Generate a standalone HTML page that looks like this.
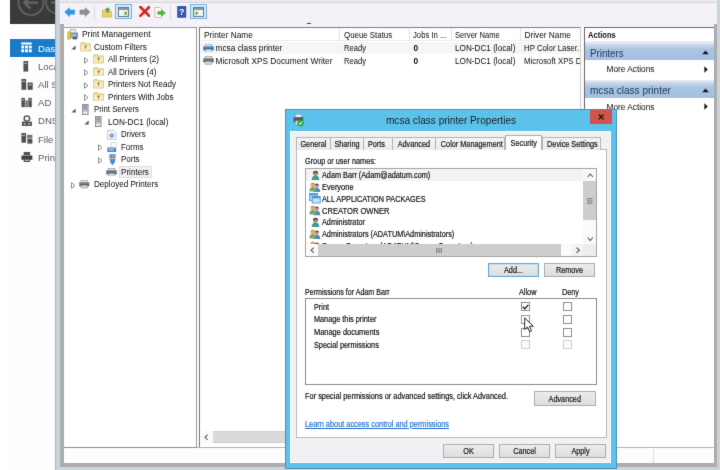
<!DOCTYPE html>
<html>
<head>
<meta charset="utf-8">
<title>Print Management</title>
<style>
html,body{margin:0;padding:0;}
body{width:720px;height:470px;position:relative;overflow:hidden;background:#ffffff;font-family:"Liberation Sans",sans-serif;color:#222;}
.a{position:absolute;}
.t{position:absolute;white-space:nowrap;line-height:1;transform-origin:0 50%;}
/* MMC (Segoe-like) text */
.m{font-size:8.3px;color:#0a0a0a;height:10px;line-height:10px;}
/* dialog (MS Sans Serif-like) text */
.d{font-size:8.5px;color:#0c0c0c;height:10px;line-height:10px;transform:scaleX(0.857);-webkit-text-stroke-width:0.18px;}
.sm{font-size:9.6px;color:#585858;height:12px;line-height:12px;}
.btn{position:absolute;box-sizing:border-box;border:1px solid #adadad;background:linear-gradient(#ececec,#dedede);height:14px;}
.btn span{white-space:nowrap;position:absolute;left:0;right:0;top:1.9px;text-align:center;font-size:8.5px;line-height:10px;color:#101010;transform:scaleX(0.857);-webkit-text-stroke-width:0.18px;}
.cb{position:absolute;box-sizing:border-box;width:9px;height:9px;border:1px solid #8c8c8c;background:#fff;}
.cb.dis{border-color:#cfcfcf;background:#fafafa;}
.tab{position:absolute;box-sizing:border-box;top:137.2px;height:12.8px;border:1px solid #b4b4b4;border-bottom:none;background:linear-gradient(#f4f4f4,#ebebeb);}
.tab span{white-space:nowrap;position:absolute;left:0;right:0;top:0.9px;text-align:center;font-size:8.5px;line-height:10px;color:#101010;transform:scaleX(0.857);-webkit-text-stroke-width:0.18px;}
.exp{position:absolute;width:0;height:0;}
</style>
</head>
<body>
<svg width="0" height="0" style="position:absolute;left:0;top:0"><defs><filter id="soft" x="0" y="0" width="100%" height="100%" color-interpolation-filters="sRGB"><feConvolveMatrix order="3" kernelMatrix="0.0081 0.0738 0.0081 0.0738 0.6724 0.0738 0.0081 0.0738 0.0081" edgeMode="duplicate" preserveAlpha="true"/></filter></defs></svg>
<div id="wrap" style="position:absolute;left:0;top:0;width:720px;height:470px;overflow:hidden;background:#fff;filter:url(#soft);">

<!-- ===== Server Manager strip (behind) ===== -->
<div class="a" style="left:10px;top:0;width:46px;height:470px;background:#fefcfe;"></div>
<div class="a" style="left:10px;top:0;width:46px;height:24px;background:#3a3a3a;overflow:hidden;">
  <svg class="a" style="left:0;top:0" width="46" height="24" viewBox="0 0 46 24">
    <circle cx="21" cy="2.5" r="12.5" fill="none" stroke="#666666" stroke-width="1.6"/>
    <path d="M28 2.6 H14.5 M20.5 -3.5 L14.3 2.6 L20.5 8.6" fill="none" stroke="#666666" stroke-width="2.2"/>
    <circle cx="47" cy="2.5" r="11" fill="none" stroke="#666666" stroke-width="1.6"/>
    <path d="M41 2.6 H50" stroke="#666666" stroke-width="2"/>
  </svg>
</div>
<div class="a" style="left:10px;top:39.3px;width:46px;height:17.6px;background:#1a7bc9;"></div>
<!-- menu icons -->
<svg class="a" style="left:20px;top:42.2px" width="13" height="11.4" viewBox="0 0 13 12">
  <rect x="1" y="0.5" width="11" height="2.2" fill="#fff"/>
  <rect x="1" y="3.8" width="3" height="3" fill="#fff"/><rect x="5" y="3.8" width="3" height="3" fill="#fff"/><rect x="9" y="3.8" width="3" height="3" fill="#fff"/>
  <rect x="1" y="7.8" width="3" height="3" fill="#fff"/><rect x="5" y="7.8" width="3" height="3" fill="#fff"/><rect x="9" y="7.8" width="3" height="3" fill="#fff"/>
</svg>
<div class="t sm" style="left:38px;top:42.5px;color:#fff;">Dashboard</div>

<svg class="a" style="left:23.3px;top:61px" width="5.6" height="10.6" viewBox="0 0 6 12" preserveAspectRatio="none"><rect x="0.5" y="0" width="5" height="12" fill="#505050"/><rect x="1.5" y="2" width="3" height="1" fill="#ddd"/></svg>
<div class="t sm" style="left:38px;top:60.7px;">Local Server</div>

<svg class="a" style="left:20.5px;top:79px" width="12.2" height="10.8" viewBox="0 0 13 12" preserveAspectRatio="none"><rect x="0.5" y="0" width="5" height="12" fill="#505050"/><rect x="7" y="4" width="5.5" height="8" fill="#505050"/><rect x="1.5" y="2" width="3" height="1" fill="#ddd"/><rect x="8" y="6" width="3.5" height="1" fill="#ddd"/></svg>
<div class="t sm" style="left:38px;top:78.9px;">All Servers</div>

<svg class="a" style="left:21px;top:97px" width="11.2" height="11" viewBox="0 0 13 13" preserveAspectRatio="none"><rect x="0.5" y="1" width="4" height="11" fill="#505050"/><rect x="8.5" y="1" width="4" height="11" fill="#505050"/><rect x="5" y="4" width="3" height="8" fill="#777"/><rect x="1.5" y="3" width="2" height="1" fill="#ddd"/><rect x="9.5" y="3" width="2" height="1" fill="#ddd"/></svg>
<div class="t sm" style="left:38px;top:97.1px;">AD</div>

<svg class="a" style="left:20.8px;top:115px" width="11.8" height="11.4" viewBox="0 0 13 13" preserveAspectRatio="none"><circle cx="6.5" cy="4" r="3" fill="none" stroke="#505050" stroke-width="1.6"/><rect x="1" y="7.5" width="11" height="5" fill="#505050"/><rect x="3" y="9.5" width="2" height="1.5" fill="#ddd"/><rect x="8" y="9.5" width="2" height="1.5" fill="#ddd"/></svg>
<div class="t sm" style="left:38px;top:115.3px;">DNS</div>

<svg class="a" style="left:20.8px;top:133.4px" width="11.8" height="10.6" viewBox="0 0 13 12" preserveAspectRatio="none"><rect x="0.5" y="0" width="5" height="11" fill="#505050"/><rect x="6.5" y="2" width="6" height="4" fill="#777"/><rect x="7" y="6.5" width="5.5" height="5.5" fill="#505050"/><rect x="1.5" y="2" width="3" height="1" fill="#ddd"/></svg>
<div class="t sm" style="left:38px;top:133.5px;">File and Storage</div>

<svg class="a" style="left:20.8px;top:152px" width="11.8" height="10.4" viewBox="0 0 13 12" preserveAspectRatio="none"><rect x="3" y="0" width="7" height="3.5" fill="#505050"/><rect x="0.5" y="4" width="12" height="5" fill="#404040"/><rect x="3" y="7.5" width="7" height="4.5" fill="#505050"/><rect x="4" y="9" width="5" height="1" fill="#ddd"/></svg>
<div class="t sm" style="left:38px;top:151.7px;">Print Services</div>

<!-- ===== MMC window frame ===== -->
<div class="a" id="frame" style="left:55px;top:0;width:665px;height:470px;background:#c9d5dd;border-left:1px solid #a9b3ba;box-sizing:border-box;"></div>
<!-- menu/toolbar band -->
<div class="a" style="left:60px;top:0;width:657px;height:25px;background:#f4f2f8;"></div>
<div class="a" style="left:60px;top:0;width:657px;height:2px;background:#ebe9ee;"></div>
<div class="a" style="left:60px;top:2px;width:657px;height:1px;background:#d9d7dc;"></div>
<!-- gray sunken border -->
<div class="a" style="left:60px;top:24px;width:656.5px;height:443px;background:#adabad;"></div>
<!-- inner client -->
<div class="a" id="client" style="left:63.5px;top:24px;width:650px;height:439px;background:#f4f2f8;"></div>

<!-- ===== Toolbar ===== -->
<!-- back arrow -->
<svg class="a" style="left:63.7px;top:6.8px" width="11.6" height="10.2" viewBox="0 0 13 12"><path d="M0.5 6 L6 0.8 V3.6 H12.2 V8.4 H6 V11.2 Z" fill="#2f9be8" stroke="#1d7fd0" stroke-width="0.6"/></svg>
<!-- forward arrow -->
<svg class="a" style="left:79.4px;top:6.8px" width="11.6" height="10.2" viewBox="0 0 13 12"><path d="M12.5 6 L7 0.8 V3.6 H0.8 V8.4 H7 V11.2 Z" fill="#8f8f8f" stroke="#7a7a7a" stroke-width="0.6"/></svg>
<div class="a" style="left:94px;top:5px;width:1px;height:15px;background:#dddbe1;"></div>
<!-- up folder -->
<svg class="a" style="left:101.8px;top:7px" width="10.4" height="10.6" viewBox="0 0 12 12"><path d="M0.5 3.5 H5 L6 5 H11.5 V11.5 H0.5 Z" fill="#e8cf6a" stroke="#b89b3c" stroke-width="0.6"/><path d="M6.5 0.5 L9.5 3.2 H7.6 V6 H5.4 V3.2 H3.5 Z" fill="#4caf3a" stroke="#2e7d1f" stroke-width="0.4"/></svg>
<!-- show/hide tree (selected) -->
<div class="a" style="left:115px;top:3.8px;width:16.8px;height:15.6px;box-sizing:border-box;border:1px solid #6cb4e6;background:#d4e8f8;"></div>
<svg class="a" style="left:118px;top:7px" width="11" height="10" viewBox="0 0 11 10"><rect x="0.5" y="0.5" width="10" height="9" fill="#f6f6f6" stroke="#707a84" stroke-width="1"/><rect x="1" y="1" width="9" height="2" fill="#8a97a6"/><rect x="5" y="3.5" width="5" height="5.5" fill="#dcebd0"/><path d="M8.5 4.6 V8 L6.4 6.3 Z" fill="#2e7d1f"/></svg>
<!-- red X -->
<svg class="a" style="left:138.5px;top:6.3px" width="11.6" height="10.8" viewBox="0 0 13 12"><path d="M1.5 1 L11.5 11 M11.5 1 L1.5 11" stroke="#d62828" stroke-width="3.1" stroke-linecap="round"/></svg>
<!-- export -->
<svg class="a" style="left:154.3px;top:6.5px" width="12.2" height="11" viewBox="0 0 13 12"><path d="M0.8 0.5 H6.5 L8.5 2.5 V11.5 H0.8 Z" fill="#fbfbf4" stroke="#a9a9a0" stroke-width="0.7"/><path d="M4 5 H8 V3 L12.3 6.5 L8 10 V8 H4 Z" fill="#55b83e" stroke="#2e8a22" stroke-width="0.5"/></svg>
<div class="a" style="left:169.5px;top:5px;width:1px;height:15px;background:#dddbe1;"></div>
<!-- help -->
<svg class="a" style="left:177px;top:6px" width="9.5" height="11.6" viewBox="0 0 10 13"><rect x="0.3" y="0.3" width="9.4" height="12.4" fill="#3557b0" stroke="#27408a" stroke-width="0.6"/><text x="5" y="10" font-family="Liberation Sans" font-size="10" font-weight="bold" fill="#fff" text-anchor="middle">?</text></svg>
<!-- action pane toggle (selected) -->
<div class="a" style="left:190.2px;top:3.8px;width:16.6px;height:15.6px;box-sizing:border-box;border:1px solid #6cb4e6;background:#d4e8f8;"></div>
<svg class="a" style="left:192.8px;top:7px" width="11" height="10" viewBox="0 0 11 10"><rect x="0.5" y="0.5" width="10" height="9" fill="#f6f6f6" stroke="#707a84" stroke-width="1"/><rect x="1" y="1" width="9" height="2" fill="#8a97a6"/><rect x="1" y="3.5" width="5" height="5.5" fill="#dcebd0"/><path d="M2.8 4.6 V8 L4.9 6.3 Z" fill="#2e7d1f"/></svg>
<div class="a" style="left:307px;top:22.5px;width:4px;height:1.5px;background:#444;"></div>

<!-- ===== Tree pane ===== -->
<div class="a" id="tree" style="left:63.5px;top:26.5px;width:133.5px;height:421px;box-sizing:border-box;background:#fff;border-top:1px solid #9c9c9c;border-right:1px solid #9c9c9c;border-bottom:1px solid #8c8c8c;"></div>
<!-- splitter -->
<div class="a" style="left:197px;top:26.5px;width:2px;height:421px;background:#fbfafc;"></div>
<!-- ===== List pane ===== -->
<div class="a" id="list" style="left:199px;top:26.5px;width:382px;height:420.2px;box-sizing:border-box;background:#fff;border-top:1px solid #7f7f7f;border-left:1.5px solid #7a7a7a;border-right:1px solid #cfcfcf;"></div>
<!-- gap between list and actions -->
<div class="a" style="left:581px;top:26.5px;width:3.5px;height:421px;background:#fbfafc;"></div>
<!-- ===== Actions pane ===== -->
<div class="a" id="actions" style="left:583.5px;top:26.5px;width:130px;height:421px;box-sizing:border-box;background:#fff;border-top:1.5px solid #6a6a6a;border-left:1.5px solid #6a6a6a;"></div>
<!-- status bar -->
<div class="a" style="left:63.5px;top:447.5px;width:650px;height:15.5px;background:#fdfdfd;"></div>
<div class="a" style="left:197px;top:446.7px;width:516.5px;height:1px;background:#b2b2b2;"></div>

<!-- ===== Tree content ===== -->
<svg class="a" style="left:66.5px;top:29px" width="11.5" height="11" viewBox="0 0 11.5 11"><rect x="3.4" y="0.6" width="5" height="4" fill="#eceef0" stroke="#8a8f94" stroke-width="0.6"/><rect x="2.6" y="3.6" width="8.4" height="5.2" fill="#7b8a96"/><rect x="4" y="5" width="5.6" height="2.8" fill="#9db9d6"/><rect x="0.6" y="2.6" width="3" height="7.8" rx="1" fill="#e3c93c" stroke="#b59a20" stroke-width="0.5"/><rect x="5.5" y="8" width="4.5" height="2.4" fill="#4d5f9a"/></svg>
<div class="t m" style="left:81.5px;top:29px;transform:scaleX(1.0104);">Print Management</div>
<svg class="a" style="left:70.5px;top:45.0px" width="5" height="5" viewBox="0 0 5 5"><path d="M4.6 0.4 V4.6 H0.4 Z" fill="#555"/></svg>
<svg class="a" style="left:80px;top:42px" width="11" height="9.5" viewBox="0 0 11 9.5"><path d="M0.4 1.8 V9.1 H10.6 V1.8 H5.6 L4.6 0.5 H1.2 Z" fill="#eddc98" stroke="#cdb66a" stroke-width="0.6"/><rect x="1" y="3" width="9" height="5.6" fill="#f5ebbc"/><path d="M3.9 3.8 H7.3 L5.9 5.3 V7.2 H5.3 V5.3 Z" fill="#6f6850"/></svg>
<div class="t m" style="left:94.3px;top:41.5px;transform:scaleX(0.9872);">Custom Filters</div>
<svg class="a" style="left:84.3px;top:56.7px" width="4.5" height="7" viewBox="0 0 4.5 7"><path d="M0.5 0.7 L4 3.5 L0.5 6.3 Z" fill="#fff" stroke="#6e6e6e" stroke-width="0.8"/></svg>
<svg class="a" style="left:93.3px;top:54.4px" width="11" height="9.5" viewBox="0 0 11 9.5"><path d="M0.4 1.8 V9.1 H10.6 V1.8 H5.6 L4.6 0.5 H1.2 Z" fill="#eddc98" stroke="#cdb66a" stroke-width="0.6"/><rect x="1" y="3" width="9" height="5.6" fill="#f5ebbc"/><path d="M3.9 3.8 H7.3 L5.9 5.3 V7.2 H5.3 V5.3 Z" fill="#6f6850"/></svg>
<div class="t m" style="left:107.5px;top:54px;transform:scaleX(0.9703);">All Printers (2)</div>
<svg class="a" style="left:84.3px;top:69.2px" width="4.5" height="7" viewBox="0 0 4.5 7"><path d="M0.5 0.7 L4 3.5 L0.5 6.3 Z" fill="#fff" stroke="#6e6e6e" stroke-width="0.8"/></svg>
<svg class="a" style="left:93.3px;top:66.9px" width="11" height="9.5" viewBox="0 0 11 9.5"><path d="M0.4 1.8 V9.1 H10.6 V1.8 H5.6 L4.6 0.5 H1.2 Z" fill="#eddc98" stroke="#cdb66a" stroke-width="0.6"/><rect x="1" y="3" width="9" height="5.6" fill="#f5ebbc"/><path d="M3.9 3.8 H7.3 L5.9 5.3 V7.2 H5.3 V5.3 Z" fill="#6f6850"/></svg>
<div class="t m" style="left:107.5px;top:66.5px;transform:scaleX(0.9612);">All Drivers (4)</div>
<svg class="a" style="left:84.3px;top:81.7px" width="4.5" height="7" viewBox="0 0 4.5 7"><path d="M0.5 0.7 L4 3.5 L0.5 6.3 Z" fill="#fff" stroke="#6e6e6e" stroke-width="0.8"/></svg>
<svg class="a" style="left:93.3px;top:79.4px" width="11" height="9.5" viewBox="0 0 11 9.5"><path d="M0.4 1.8 V9.1 H10.6 V1.8 H5.6 L4.6 0.5 H1.2 Z" fill="#eddc98" stroke="#cdb66a" stroke-width="0.6"/><rect x="1" y="3" width="9" height="5.6" fill="#f5ebbc"/><path d="M3.9 3.8 H7.3 L5.9 5.3 V7.2 H5.3 V5.3 Z" fill="#6f6850"/></svg>
<div class="t m" style="left:107.5px;top:79px;transform:scaleX(0.9701);">Printers Not Ready</div>
<svg class="a" style="left:84.3px;top:94.2px" width="4.5" height="7" viewBox="0 0 4.5 7"><path d="M0.5 0.7 L4 3.5 L0.5 6.3 Z" fill="#fff" stroke="#6e6e6e" stroke-width="0.8"/></svg>
<svg class="a" style="left:93.3px;top:91.9px" width="11" height="9.5" viewBox="0 0 11 9.5"><path d="M0.4 1.8 V9.1 H10.6 V1.8 H5.6 L4.6 0.5 H1.2 Z" fill="#eddc98" stroke="#cdb66a" stroke-width="0.6"/><rect x="1" y="3" width="9" height="5.6" fill="#f5ebbc"/><path d="M3.9 3.8 H7.3 L5.9 5.3 V7.2 H5.3 V5.3 Z" fill="#6f6850"/></svg>
<div class="t m" style="left:107.5px;top:91.5px;transform:scaleX(0.9728);">Printers With Jobs</div>
<svg class="a" style="left:70.5px;top:107.5px" width="5" height="5" viewBox="0 0 5 5"><path d="M4.6 0.4 V4.6 H0.4 Z" fill="#555"/></svg>
<svg class="a" style="left:82px;top:104px" width="6.5" height="11" viewBox="0 0 6.5 11"><rect x="0.4" y="0.4" width="5.7" height="10.2" fill="#c9cdd1" stroke="#7d8388" stroke-width="0.8"/><rect x="1.3" y="1.6" width="3.9" height="1" fill="#6f767c"/><rect x="1.3" y="3.4" width="3.9" height="1" fill="#6f767c"/><rect x="1.3" y="5.2" width="3.9" height="1" fill="#8d9499"/><rect x="1.3" y="8" width="3.9" height="1.6" fill="#eef0f2"/></svg>
<div class="t m" style="left:94.3px;top:104px;transform:scaleX(0.9384);">Print Servers</div>
<svg class="a" style="left:83.5px;top:120.1px" width="5" height="5" viewBox="0 0 5 5"><path d="M4.6 0.4 V4.6 H0.4 Z" fill="#555"/></svg>
<svg class="a" style="left:95px;top:116.3px" width="6.5" height="11" viewBox="0 0 6.5 11"><rect x="0.4" y="0.4" width="5.7" height="10.2" fill="#c9cdd1" stroke="#7d8388" stroke-width="0.8"/><rect x="1.3" y="1.6" width="3.9" height="1" fill="#6f767c"/><rect x="1.3" y="3.4" width="3.9" height="1" fill="#6f767c"/><rect x="1.3" y="5.2" width="3.9" height="1" fill="#8d9499"/><rect x="1.3" y="8" width="3.9" height="1.6" fill="#eef0f2"/></svg>
<div class="t m" style="left:107.5px;top:116.5px;transform:scaleX(0.9849);">LON-DC1 (local)</div>
<svg class="a" style="left:107px;top:129.5px" width="9.5" height="10" viewBox="0 0 9.5 10"><path d="M0.5 0.5 H6.5 L9 3 V9.5 H0.5 Z" fill="#f7f9fb" stroke="#a9b4c0" stroke-width="0.7"/><circle cx="4.7" cy="5.6" r="2" fill="#8fb2dc" stroke="#5b84b8" stroke-width="0.6"/></svg>
<div class="t m" style="left:120.6px;top:129px;transform:scaleX(0.9360);">Drivers</div>
<svg class="a" style="left:98px;top:144.3px" width="4.5" height="7" viewBox="0 0 4.5 7"><path d="M0.5 0.7 L4 3.5 L0.5 6.3 Z" fill="#fff" stroke="#6e6e6e" stroke-width="0.8"/></svg>
<svg class="a" style="left:106.5px;top:141.5px" width="10.5" height="10.5" viewBox="0 0 10.5 10.5"><path d="M4 0.5 H8.5 L10 2 V7 H4 Z" fill="#fbfbfb" stroke="#b5b5b5" stroke-width="0.6"/><rect x="0.4" y="5.2" width="8.6" height="4.8" fill="#3f7fd0"/><rect x="0.4" y="5.2" width="8.6" height="1.6" fill="#8fc0f0"/><rect x="2" y="7.6" width="5" height="1" fill="#dceaf8"/></svg>
<div class="t m" style="left:120.6px;top:141.8px;transform:scaleX(0.9611);">Forms</div>
<svg class="a" style="left:98px;top:156.7px" width="4.5" height="7" viewBox="0 0 4.5 7"><path d="M0.5 0.7 L4 3.5 L0.5 6.3 Z" fill="#fff" stroke="#6e6e6e" stroke-width="0.8"/></svg>
<svg class="a" style="left:108.5px;top:154px" width="7" height="12" viewBox="0 0 7 12"><rect x="0.8" y="0.4" width="5.4" height="5" fill="#a8b8c8" stroke="#6c7f92" stroke-width="0.6"/><rect x="1.8" y="1.4" width="1" height="2.4" fill="#4a5a6a"/><rect x="4.1" y="1.4" width="1" height="2.4" fill="#4a5a6a"/><path d="M1 5.4 H6 V8 L3.5 11.6 L1 8 Z" fill="#4a90d8"/></svg>
<div class="t m" style="left:120.6px;top:154.3px;transform:scaleX(0.9600);">Ports</div>
<div class="a" style="left:118.5px;top:165.5px;width:33px;height:12px;box-sizing:border-box;background:#f1f1f1;border:1px solid #dedede;"></div>
<svg class="a" style="left:106.3px;top:167.5px" width="11" height="8.5" viewBox="0 0 11 8.5"><rect x="2.2" y="0.3" width="6.6" height="2.6" fill="#e8eaec" stroke="#8a8f94" stroke-width="0.6"/><rect x="0.3" y="2.4" width="10.4" height="4" fill="#5f666c"/><rect x="0.3" y="2.4" width="10.4" height="1.2" fill="#8a9197"/><rect x="2.2" y="5.2" width="6.6" height="3" fill="#d5d8db" stroke="#7d8388" stroke-width="0.5"/></svg>
<div class="t m" style="left:120.6px;top:166.6px;transform:scaleX(0.9757);">Printers</div>
<svg class="a" style="left:71px;top:181.8px" width="4.5" height="7" viewBox="0 0 4.5 7"><path d="M0.5 0.7 L4 3.5 L0.5 6.3 Z" fill="#fff" stroke="#6e6e6e" stroke-width="0.8"/></svg>
<svg class="a" style="left:79px;top:180px" width="10.5" height="8.5" viewBox="0 0 11 8.5"><rect x="2.2" y="0.3" width="6.6" height="2.6" fill="#e8eaec" stroke="#8a8f94" stroke-width="0.6"/><rect x="0.3" y="2.4" width="10.4" height="4" fill="#5f666c"/><rect x="0.3" y="2.4" width="10.4" height="1.2" fill="#8a9197"/><rect x="2.2" y="5.2" width="6.6" height="3" fill="#d5d8db" stroke="#7d8388" stroke-width="0.5"/></svg>
<div class="t m" style="left:94.3px;top:179.2px;transform:scaleX(0.9749);">Deployed Printers</div>

<!-- ===== List content ===== -->
<div class="a" style="left:200.5px;top:27.5px;width:379.5px;height:12.5px;background:#fff;border-bottom:1px solid #ececec;"></div>
<div class="a" style="left:339px;top:28px;width:1px;height:12px;background:#e2e2e2;"></div>
<div class="a" style="left:408.5px;top:28px;width:1px;height:12px;background:#e2e2e2;"></div>
<div class="a" style="left:450.5px;top:28px;width:1px;height:12px;background:#e2e2e2;"></div>
<div class="a" style="left:519.5px;top:28px;width:1px;height:12px;background:#e2e2e2;"></div>
<div class="a" style="left:200.5px;top:41.5px;width:379.5px;height:12.5px;background:#f6f6f6;"></div>
<div class="t m" style="left:204px;top:29.700000000000003px;">Printer Name</div>
<div class="t m" style="left:343.7px;top:29.700000000000003px;transform:scaleX(0.9498);">Queue Status</div>
<div class="t m" style="left:413px;top:29.700000000000003px;transform:scaleX(0.9282);">Jobs In ...</div>
<div class="t m" style="left:455px;top:29.700000000000003px;transform:scaleX(0.9166);">Server Name</div>
<div class="t m" style="left:524.4px;top:29.700000000000003px;">Driver Name</div>
<svg class="a" style="left:203px;top:43.9px" width="11" height="8.5" viewBox="0 0 11 8.5"><rect x="2.2" y="0.3" width="6.6" height="2.6" fill="#e2edf7" stroke="#7fa3c4" stroke-width="0.6"/><rect x="0.3" y="2.4" width="10.4" height="4" fill="#3f6f9c"/><rect x="0.3" y="2.4" width="10.4" height="1.2" fill="#6f9cc6"/><rect x="2.2" y="5.2" width="6.6" height="3" fill="#d3e2f0" stroke="#6f94b6" stroke-width="0.5"/></svg>
<div class="t m" style="left:215.5px;top:43px;">mcsa class printer</div>
<div class="t m" style="left:343.7px;top:43px;transform:scaleX(0.9173);">Ready</div>
<div class="t m" style="left:413.5px;top:43px;font-weight:bold;">0</div>
<div class="t m" style="left:455px;top:43px;transform:scaleX(0.9849);">LON-DC1 (local)</div>
<div class="a" style="left:524.4px;top:42px;width:55.5px;height:12px;overflow:hidden;"><div class="t m" style="left:0;top:1px;transform:scaleX(0.9414);">HP Color Laser.</div></div>
<svg class="a" style="left:203px;top:56.400000000000006px" width="11" height="8.5" viewBox="0 0 11 8.5"><rect x="2.2" y="0.3" width="6.6" height="2.6" fill="#e8eaec" stroke="#8a8f94" stroke-width="0.6"/><rect x="0.3" y="2.4" width="10.4" height="4" fill="#5f666c"/><rect x="0.3" y="2.4" width="10.4" height="1.2" fill="#8a9197"/><rect x="2.2" y="5.2" width="6.6" height="3" fill="#d5d8db" stroke="#7d8388" stroke-width="0.5"/></svg>
<div class="t m" style="left:215.5px;top:55.7px;">Microsoft XPS Document Writer</div>
<div class="t m" style="left:343.7px;top:55.7px;transform:scaleX(0.9173);">Ready</div>
<div class="t m" style="left:413.5px;top:55.7px;font-weight:bold;">0</div>
<div class="t m" style="left:455px;top:55.7px;transform:scaleX(0.9849);">LON-DC1 (local)</div>
<div class="a" style="left:524.4px;top:54.7px;width:55.5px;height:12px;overflow:hidden;"><div class="t m" style="left:0;top:1px;transform:scaleX(0.9432);">Microsoft XPS D</div></div>
<div class="a" style="left:200.5px;top:431.4px;width:379.5px;height:11.3px;background:#dadada;border-top:1px solid #cfcfcf;border-bottom:1px solid #cfcfcf;box-sizing:border-box;"></div>
<div class="a" style="left:200.5px;top:431.4px;width:12px;height:11.3px;background:#fafafa;"></div>
<svg class="a" style="left:204px;top:433.7px" width="4.6" height="6.6" viewBox="0 0 5 7"><path d="M4 0.7 L1 3.5 L4 6.3" fill="none" stroke="#555" stroke-width="1.1"/></svg>

<!-- ===== Actions content ===== -->
<div class="t m" style="left:588px;top:30.299999999999997px;font-weight:bold;font-size:8.7px;color:#111;transform:scaleX(0.8726);">Actions</div>
<div class="a" style="left:585.5px;top:41px;width:128px;height:1px;background:#e9e9ef;"></div>
<div class="a" style="left:585px;top:41.7px;width:128.5px;height:18.6px;background:linear-gradient(#eef0f7 0%,#c4d5ea 18%,#aac5e3 40%,#a3bfe0 100%);"></div>
<div class="t" style="left:589.7px;top:47.5px;font-size:10.2px;height:12px;line-height:12px;color:#1e3250;transform:scaleX(0.955);">Printers</div>
<svg class="a" style="left:701.6px;top:50.2px" width="7" height="4.5" viewBox="0 0 7 4.5"><path d="M0.2 4.3 L3.5 0.4 L6.8 4.3 Z" fill="#1a1a1a"/></svg>
<div class="t m" style="left:606.5px;top:64px;">More Actions</div>
<svg class="a" style="left:704px;top:65.5px" width="4" height="7" viewBox="0 0 4 7"><path d="M0.3 0.3 L3.8 3.5 L0.3 6.7 Z" fill="#1a1a1a"/></svg>
<div class="a" style="left:585px;top:80.2px;width:128.5px;height:17.6px;background:linear-gradient(#eef0f7 0%,#c4d5ea 18%,#aac5e3 40%,#a3bfe0 100%);"></div>
<div class="t" style="left:589.7px;top:85px;font-size:10.2px;height:12px;line-height:12px;color:#1e3250;transform:scaleX(0.985);">mcsa class printer</div>
<svg class="a" style="left:701.6px;top:88px" width="7" height="4.5" viewBox="0 0 7 4.5"><path d="M0.2 4.3 L3.5 0.4 L6.8 4.3 Z" fill="#1a1a1a"/></svg>
<div class="t m" style="left:606.5px;top:101.5px;">More Actions</div>
<svg class="a" style="left:704px;top:103px" width="4" height="7" viewBox="0 0 4 7"><path d="M0.3 0.3 L3.8 3.5 L0.3 6.7 Z" fill="#1a1a1a"/></svg>

<!-- ===== Properties dialog ===== -->
<div class="a" id="dlg" style="left:285px;top:109.3px;width:332px;height:359.4px;box-sizing:border-box;background:#5bc2ec;border:1px solid #4593bb;"></div>
<div class="a" id="dlgclient" style="left:289.8px;top:130.8px;width:321.7px;height:332.6px;box-sizing:border-box;border:1px solid #fbfbfd;background:#f2f0f2;"></div>
<svg class="a" style="left:292.5px;top:114px" width="11" height="12.5" viewBox="0 0 11 12.5"><rect x="2.6" y="0.4" width="5.6" height="3.4" fill="#f4eef6" stroke="#9a9aa2" stroke-width="0.5"/><rect x="0.6" y="3.2" width="9.6" height="5" fill="#4f5960"/><rect x="2.6" y="6.8" width="5.6" height="3.6" fill="#e6e8ea" stroke="#8a9096" stroke-width="0.4"/><circle cx="7.6" cy="9" r="3.1" fill="#35b44a" stroke="#1f8a32" stroke-width="0.5"/><path d="M6 9 L7.2 10.3 L9.3 7.6" fill="none" stroke="#fff" stroke-width="1"/></svg>
<div class="t" style="left:291px;top:113.5px;width:320px;text-align:center;font-size:10.1px;height:13px;line-height:13px;color:#1c1c1c;">mcsa class printer Properties</div>
<div class="a" style="left:589.7px;top:110.3px;width:22.5px;height:14.2px;background:#d2524c;"></div>
<svg class="a" style="left:597.9px;top:114.3px" width="6.3" height="5.9" viewBox="0 0 7 6.5"><path d="M0.8 0.6 L6.2 5.9 M6.2 0.6 L0.8 5.9" stroke="#1a1a1a" stroke-width="1.5"/></svg>
<div class="a" id="tabpage" style="left:295.7px;top:149.3px;width:311px;height:289.2px;box-sizing:border-box;background:#fff;border:1px solid #b9b9b9;"></div>
<div class="tab" style="left:296.2px;width:34.8px;"><span style="">General</span></div>
<div class="tab" style="left:330px;width:33.9px;"><span style="">Sharing</span></div>
<div class="tab" style="left:362.9px;width:30.3px;"><span style="padding-right:4px;box-sizing:border-box;">Ports</span></div>
<div class="tab" style="left:392.2px;width:43.8px;"><span style="">Advanced</span></div>
<div class="tab" style="left:435px;width:69.5px;"><span style="">Color Management</span></div>
<div class="tab" style="left:541.5px;width:59.0px;"><span style="">Device Settings</span></div>
<div class="tab" style="left:504.5px;top:135.3px;width:37.5px;height:15px;background:#fff;border-color:#b0b0b0;"><span style="top:1.6px;">Security</span></div>

<!-- ===== Security tab content ===== -->
<div class="t d" style="left:305px;top:155.6px;">Group or user names:</div>
<div class="a" id="lb" style="left:305px;top:167.8px;width:292px;height:89.2px;box-sizing:border-box;background:#fff;border:1px solid #a3a3a3;"></div>
<div class="a" style="left:306px;top:169.4px;width:277px;height:11.9px;background:#f3f3f3;"></div>
<svg class="a" style="left:310.5px;top:169.8px" width="9" height="10.5" viewBox="0 0 9 10.5"><path d="M0.8 10.3 C0.8 6.6 2.4 5.6 4.5 5.6 C6.6 5.6 8.2 6.6 8.2 10.3 Z" fill="#3f9a8c"/><circle cx="4.5" cy="3.3" r="2.5" fill="#a88a6c"/><path d="M1.9 3.4 C1.7 0.2 7.3 0.2 7.1 3.4 C6.2 2.2 2.8 2.2 1.9 3.4 Z" fill="#3f3a32"/></svg>
<div class="t d" style="left:321.5px;top:170.4px;">Adam Barr (Adam@adatum.com)</div>
<svg class="a" style="left:309px;top:181.6px" width="11.5" height="10.5" viewBox="0 0 11.5 10.5"><path d="M4.5 10.2 C4.5 6.8 6 5.8 7.8 5.8 C9.6 5.8 11.2 6.8 11.2 10.2 Z" fill="#4b86c8"/><circle cx="7.8" cy="3.6" r="2.2" fill="#b8946f"/><path d="M5.7 3.4 C5.8 1.2 9.8 1.2 9.9 3.4 C9 2.5 6.6 2.5 5.7 3.4 Z" fill="#5a4a38"/><path d="M0.4 9.4 C0.4 6 1.8 5 3.8 5 C5.8 5 7.2 6 7.2 9.4 Z" fill="#7da862"/><circle cx="3.8" cy="2.9" r="2.3" fill="#d6ae84"/><path d="M1.4 2.9 C1.4 0.2 6.2 0.2 6.2 2.9 C5.3 1.8 2.3 1.8 1.4 2.9 Z" fill="#c9923a"/></svg>
<div class="t d" style="left:321.5px;top:182.2px;transform:scaleX(0.8797);">Everyone</div>
<svg class="a" style="left:309px;top:193.3px" width="11.5" height="10.5" viewBox="0 0 11.5 10.5"><rect x="0.5" y="0.5" width="8" height="7" fill="#a9d6f5" stroke="#3f96da" stroke-width="0.8"/><rect x="0.5" y="0.5" width="8" height="1.8" fill="#4b9ad6"/><rect x="3.2" y="3.6" width="8" height="6.4" fill="#c4e4f8" stroke="#3a8fd4" stroke-width="0.8"/><rect x="3.2" y="3.6" width="8" height="1.6" fill="#3f8fce"/></svg>
<div class="t d" style="left:321.5px;top:193.9px;">ALL APPLICATION PACKAGES</div>
<svg class="a" style="left:309px;top:205.1px" width="11.5" height="10.5" viewBox="0 0 11.5 10.5"><path d="M4.5 10.2 C4.5 6.8 6 5.8 7.8 5.8 C9.6 5.8 11.2 6.8 11.2 10.2 Z" fill="#4b86c8"/><circle cx="7.8" cy="3.6" r="2.2" fill="#b8946f"/><path d="M5.7 3.4 C5.8 1.2 9.8 1.2 9.9 3.4 C9 2.5 6.6 2.5 5.7 3.4 Z" fill="#5a4a38"/><path d="M0.4 9.4 C0.4 6 1.8 5 3.8 5 C5.8 5 7.2 6 7.2 9.4 Z" fill="#7da862"/><circle cx="3.8" cy="2.9" r="2.3" fill="#d6ae84"/><path d="M1.4 2.9 C1.4 0.2 6.2 0.2 6.2 2.9 C5.3 1.8 2.3 1.8 1.4 2.9 Z" fill="#c9923a"/></svg>
<div class="t d" style="left:321.5px;top:205.7px;transform:scaleX(0.8915);">CREATOR OWNER</div>
<svg class="a" style="left:310.5px;top:216.8px" width="9" height="10.5" viewBox="0 0 9 10.5"><path d="M0.8 10.3 C0.8 6.6 2.4 5.6 4.5 5.6 C6.6 5.6 8.2 6.6 8.2 10.3 Z" fill="#3f9a8c"/><circle cx="4.5" cy="3.3" r="2.5" fill="#a88a6c"/><path d="M1.9 3.4 C1.7 0.2 7.3 0.2 7.1 3.4 C6.2 2.2 2.8 2.2 1.9 3.4 Z" fill="#3f3a32"/></svg>
<div class="t d" style="left:321.5px;top:217.4px;">Administrator</div>
<svg class="a" style="left:309px;top:228.6px" width="11.5" height="10.5" viewBox="0 0 11.5 10.5"><path d="M4.5 10.2 C4.5 6.8 6 5.8 7.8 5.8 C9.6 5.8 11.2 6.8 11.2 10.2 Z" fill="#4b86c8"/><circle cx="7.8" cy="3.6" r="2.2" fill="#b8946f"/><path d="M5.7 3.4 C5.8 1.2 9.8 1.2 9.9 3.4 C9 2.5 6.6 2.5 5.7 3.4 Z" fill="#5a4a38"/><path d="M0.4 9.4 C0.4 6 1.8 5 3.8 5 C5.8 5 7.2 6 7.2 9.4 Z" fill="#7da862"/><circle cx="3.8" cy="2.9" r="2.3" fill="#d6ae84"/><path d="M1.4 2.9 C1.4 0.2 6.2 0.2 6.2 2.9 C5.3 1.8 2.3 1.8 1.4 2.9 Z" fill="#c9923a"/></svg>
<div class="t d" style="left:321.5px;top:229.2px;">Administrators (ADATUM\Administrators)</div>
<div class="a" style="left:306px;top:240px;width:277px;height:4.4px;overflow:hidden;"><svg class="a" style="left:3px;top:0.6px" width="11.5" height="10.5" viewBox="0 0 11.5 10.5"><path d="M4.5 10.2 C4.5 6.8 6 5.8 7.8 5.8 C9.6 5.8 11.2 6.8 11.2 10.2 Z" fill="#4b86c8"/><circle cx="7.8" cy="3.6" r="2.2" fill="#b8946f"/><path d="M5.7 3.4 C5.8 1.2 9.8 1.2 9.9 3.4 C9 2.5 6.6 2.5 5.7 3.4 Z" fill="#5a4a38"/><path d="M0.4 9.4 C0.4 6 1.8 5 3.8 5 C5.8 5 7.2 6 7.2 9.4 Z" fill="#7da862"/><circle cx="3.8" cy="2.9" r="2.3" fill="#d6ae84"/><path d="M1.4 2.9 C1.4 0.2 6.2 0.2 6.2 2.9 C5.3 1.8 2.3 1.8 1.4 2.9 Z" fill="#c9923a"/></svg><div class="t d" style="left:15.5px;top:1.4px;">Server Operators (ADATUM\Server Operators)</div></div>
<div class="a" style="left:583.3px;top:168.8px;width:12.7px;height:75.5px;background:#f9f9f9;"></div>
<div class="a" style="left:583.3px;top:181.3px;width:12.7px;height:38.3px;background:#cdcdcd;"></div>
<div class="a" style="left:583.3px;top:219.6px;width:12.7px;height:13.4px;background:#fbfbfb;"></div>
<svg class="a" style="left:586.5px;top:173px" width="6.5" height="4.5" viewBox="0 0 6.5 4.5"><path d="M0.6 4 L3.25 1 L5.9 4" fill="none" stroke="#555" stroke-width="1.1"/></svg>
<svg class="a" style="left:586.5px;top:236.5px" width="6.5" height="4.5" viewBox="0 0 6.5 4.5"><path d="M0.6 0.5 L3.25 3.5 L5.9 0.5" fill="none" stroke="#555" stroke-width="1.1"/></svg>
<svg class="a" style="left:587px;top:197.5px" width="5.5" height="6" viewBox="0 0 5.5 6"><path d="M0 0.8 H5.5 M0 3 H5.5 M0 5.2 H5.5" stroke="#666" stroke-width="0.9"/></svg>
<div class="a" style="left:306px;top:244.3px;width:290px;height:11.7px;background:#f3f3f3;"></div>
<div class="a" style="left:318px;top:244.3px;width:242.5px;height:11.7px;background:#cdcdcd;"></div>
<div class="a" style="left:560.5px;top:244.3px;width:11.5px;height:11.7px;background:#fbfbfb;"></div>
<div class="a" style="left:583.3px;top:244.3px;width:12.7px;height:11.7px;background:#ededed;"></div>
<div class="a" style="left:306px;top:244.3px;width:12px;height:11.7px;background:#fbfbfb;"></div>
<svg class="a" style="left:309.5px;top:247px" width="4.5" height="6.5" viewBox="0 0 4.5 6.5"><path d="M4 0.6 L1 3.25 L4 5.9" fill="none" stroke="#555" stroke-width="1.1"/></svg>
<svg class="a" style="left:575.5px;top:247px" width="4.5" height="6.5" viewBox="0 0 4.5 6.5"><path d="M0.5 0.6 L3.5 3.25 L0.5 5.9" fill="none" stroke="#555" stroke-width="1.1"/></svg>
<svg class="a" style="left:436px;top:247.5px" width="6" height="5.5" viewBox="0 0 6 5.5"><path d="M0.8 0 V5.5 M3 0 V5.5 M5.2 0 V5.5" stroke="#666" stroke-width="0.9"/></svg>
<div class="btn" style="left:488px;top:262.5px;width:51px;height:14.3px;border-color:#62a6d8;box-shadow:inset 0 0 0 1px #c4def2;"><span>Add...</span></div>
<div class="btn" style="left:544.2px;top:262.5px;width:51px;height:14.3px;"><span>Remove</span></div>
<div class="t d" style="left:305px;top:286.5px;transform:scaleX(0.8378);">Permissions for Adam Barr</div>
<div class="t d" style="left:519.2px;top:286.5px;">Allow</div>
<div class="t d" style="left:562px;top:286.5px;">Deny</div>
<div class="a" id="perm" style="left:305px;top:298.2px;width:292px;height:86.5px;box-sizing:border-box;background:#fff;border:1px solid #8c8c8c;"></div>
<div class="t d" style="left:313.6px;top:301.8px;">Print</div>
<div class="cb" style="left:520.7px;top:302.3px;"></div>
<div class="cb" style="left:562.5px;top:302.3px;"></div>
<div class="t d" style="left:313.6px;top:314.4px;">Manage this printer</div>
<div class="cb" style="left:520.7px;top:314.9px;border-color:#5aa9e0;"></div>
<div class="cb" style="left:562.5px;top:314.9px;"></div>
<div class="t d" style="left:313.6px;top:327.0px;transform:scaleX(0.8758);">Manage documents</div>
<div class="cb" style="left:520.7px;top:327.5px;"></div>
<div class="cb" style="left:562.5px;top:327.5px;"></div>
<div class="t d" style="left:313.6px;top:339.6px;">Special permissions</div>
<div class="cb dis" style="left:520.7px;top:340.1px;"></div>
<div class="cb dis" style="left:562.5px;top:340.1px;"></div>
<svg class="a" style="left:522px;top:303.8px" width="7" height="6" viewBox="0 0 7 6"><path d="M0.8 2.8 L2.8 4.9 L6.3 0.8" fill="none" stroke="#111" stroke-width="1.3"/></svg>
<svg class="a" style="left:524px;top:316.8px" width="11" height="16" viewBox="0 0 11 16"><path d="M0.7 0.8 V12.6 L3.5 10 L5.6 14.8 L7.6 13.9 L5.5 9.3 H9.3 Z" fill="#fff" stroke="#111" stroke-width="0.9" stroke-linejoin="round"/></svg>
<div class="t d" style="left:305px;top:390.5px;transform:scaleX(0.8698);">For special permissions or advanced settings, click Advanced.</div>
<div class="btn" style="left:534px;top:391.2px;width:61.5px;height:14.6px;"><span style="top:2.3px;">Advanced</span></div>
<div class="t d" style="left:305px;top:418.6px;color:#1f6fd0;text-decoration:underline;text-decoration-thickness:0.7px;transform:scaleX(0.8658);">Learn about access control and permissions</div>
<div class="btn" style="left:443px;top:443.5px;width:51px;"><span>OK</span></div>
<div class="btn" style="left:499px;top:443.5px;width:51px;"><span>Cancel</span></div>
<div class="btn" style="left:555.3px;top:443.5px;width:51px;"><span>Apply</span></div>
<div class="a" style="left:653px;top:448.5px;width:1px;height:14px;background:#dcdcdc;z-index:0;"></div>

</div>
</body>
</html>
